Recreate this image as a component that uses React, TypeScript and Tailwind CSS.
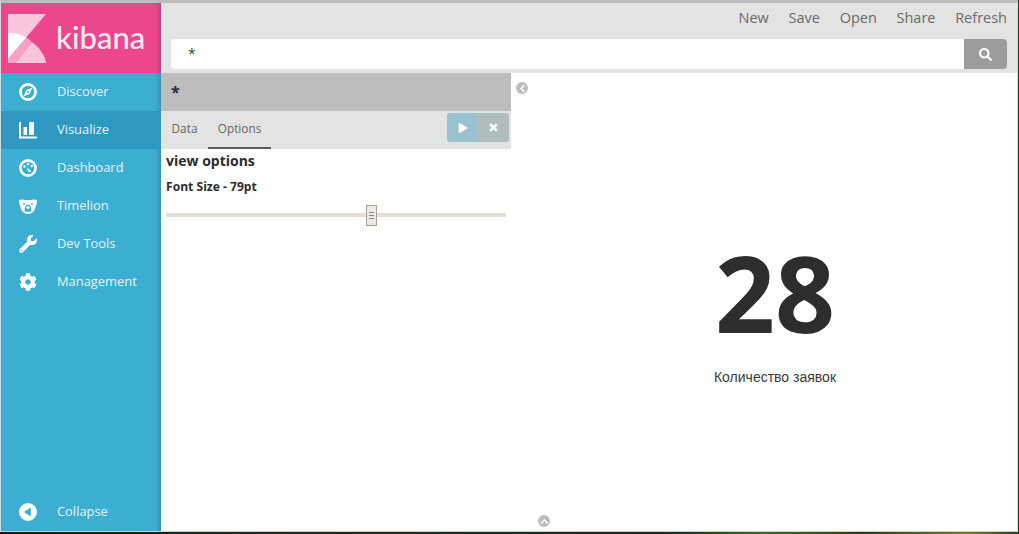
import React from "react";
import { FaWrench, FaCog, FaSearch, FaPlay, FaChevronLeft, FaChevronUp } from "react-icons/fa";

const Logo = () => (
  <svg width="38" height="49" viewBox="0 0 38 49" className="block">
    <path d="M0 0H38L0 45Z" fill="#f9c6dc" />
    <path d="M0 19C7 18.800 13 20 18.500 23.500L0 45Z" fill="#ffffff" />
    <path d="M24 28C31 33 37 41 38 49H7.500Z" fill="#f9c6dc" />
    <path d="M18.500 23.500L24 28L7.500 49H0V45Z" fill="#f5a3c7" />
  </svg>
);

const Compass = () => (
  <svg width="18" height="18" viewBox="0 0 18 18">
    <circle cx="9" cy="9" r="7.600" fill="none" stroke="#fff" strokeWidth="2.600" />
    <path d="M13.500 4.500L10.700 10.700L4.500 13.500L7.300 7.300Z" fill="#fff" />
    <circle cx="9" cy="9" r="1" fill="#3caed2" />
  </svg>
);

const Bars = () => (
  <svg width="18" height="17" viewBox="0 0 18 17">
    <path d="M0 0H2V14.500H18V16.500H0Z" fill="#fff" />
    <rect x="4.500" y="5" width="3.500" height="8" fill="#fff" />
    <rect x="10" y="0" width="5" height="13" fill="#fff" />
  </svg>
);

const Gauge = () => (
  <svg width="18" height="18" viewBox="0 0 18 18">
    <circle cx="9" cy="9" r="7.600" fill="none" stroke="#fff" strokeWidth="2.600" />
    <circle cx="9" cy="5" r="1.300" fill="#fff" />
    <circle cx="12.800" cy="7" r="1.200" fill="#fff" />
    <circle cx="5.500" cy="7.500" r="1.200" fill="#fff" />
    <path d="M7.500 8.500L12.500 12L10 13.500Z" fill="#fff" />
  </svg>
);

const Bear = () => (
  <svg width="18" height="15" viewBox="0 0 18 15">
    <path
      d="M0 1C3 0 5 .5 6 1H12C13 .5 15 0 18 1C18 4 17.500 5.500 16.800 6.500C16.500 11 13.500 15 9 15C4.500 15 1.500 11 1.200 6.500C.5 5.500 0 4 0 1Z"
      fill="#fff"
    />
    <circle cx="5" cy="5" r=".9" fill="#3caed2" />
    <circle cx="13" cy="5" r=".9" fill="#3caed2" />
    <path d="M9 5.500C11.500 5.500 12.800 9 12.200 12.800H5.800C5.200 9 6.500 5.500 9 5.500Z" fill="#3caed2" />
    <ellipse cx="9" cy="8.500" rx="1.800" ry="1.300" fill="#fff" />
  </svg>
);

const CollapseIcon = () => (
  <svg width="18" height="18" viewBox="0 0 18 18">
    <circle cx="9" cy="9" r="9" fill="#fff" />
    <path d="M11.800 4.500V13.500L5 9Z" fill="#3caed2" />
  </svg>
);

const CloseIcon = () => (
  <svg width="9" height="9" viewBox="0 0 9 9">
    <path d="M1.200 1.200L7.800 7.800M7.800 1.200L1.200 7.800" stroke="#fff" strokeWidth="2.600" />
  </svg>
);

const navItems = [
  { label: "Discover", icon: <Compass /> },
  { label: "Visualize", icon: <Bars />, active: true },
  { label: "Dashboard", icon: <Gauge /> },
  { label: "Timelion", icon: <Bear /> },
  { label: "Dev Tools", icon: <FaWrench size={18} color="#fff" /> },
  { label: "Management", icon: <FaCog size={18} color="#fff" /> },
];

function NavRow({ label, icon, active }: { label: string; icon: React.ReactNode; active?: boolean }) {
  return (
    <div className={`flex h-[38px] items-center ${active ? "bg-[#2e98c1]" : ""}`}>
      <div className="flex w-[56px] shrink-0 pl-[18px]">{icon}</div>
      <span className="text-[12.9px] text-[#e4f4f9]">{label}</span>
    </div>
  );
}

export default function App() {
  return (
    <div className="flex h-[534px] w-[1019px] flex-col overflow-hidden bg-[linear-gradient(to_right,#0a1a1c,#10301c_30%,#0c2a18_65%,#3a6a20_75%,#20401a_85%,#7a7a20_95%,#20401a)] font-['Open_Sans',sans-serif]">
      <div className="flex h-[532px] w-[1018px] flex-col border-x border-b border-x-[#d8d8d8] border-b-[#cfcfcf] border-t-[3px] border-t-[#bdbdbd] bg-white">
        <div className="flex min-h-0 flex-1">
          {/* sidebar */}
          <div className="flex w-[160px] shrink-0 flex-col bg-[#3caed2] shadow-[inset_-5px_0_4px_-3px_rgba(0,0,0,0.18)]">
            <div className="flex h-[70px] shrink-0 items-center gap-[10px] bg-[#ec478c] pl-[7px] shadow-[inset_-5px_0_4px_-3px_rgba(0,0,0,0.18)]">
              <Logo />
              <span className="mt-[-1px] text-[31px] leading-none font-medium text-[#fdeaf2] font-['Lato',sans-serif]">kibana</span>
            </div>
            {navItems.map((item) => (
              <NavRow key={item.label} {...item} />
            ))}
            <div className="mt-auto">
              <NavRow label="Collapse" icon={<CollapseIcon />} />
            </div>
          </div>

          {/* main */}
          <div className="flex min-w-0 flex-1 flex-col">
            <div className="h-[70px] shrink-0 bg-[#e3e3e3] pr-[10px]">
              <div className="flex h-[36px] items-center justify-end gap-[19.700px] pb-[6px] text-[14.5px] text-[#6a6a6a]">
                <span>New</span>
                <span>Save</span>
                <span>Open</span>
                <span>Share</span>
                <span>Refresh</span>
              </div>
              <div className="ml-[10px] flex h-[30px]">
                <div className="flex-1 rounded-l-[4px] bg-white pl-[17px] text-[14px] leading-[30px] text-[#444]">*</div>
                <div className="flex w-[43px] items-center justify-center rounded-r-[4px] bg-[#9c9c9c]">
                  <FaSearch size={13} color="#fff" />
                </div>
              </div>
            </div>

            <div className="relative flex min-h-0 flex-1">
              {/* editor panel */}
              <div className="w-[350px] shrink-0">
                <div className="h-[38px] bg-[#bdbdbd] pl-[10px] text-[16px] leading-[38px] font-bold text-[#2d2d2d]">*</div>
                <div className="flex h-[38px] items-stretch justify-between bg-[#e3e3e3] pr-[2px]">
                  <div className="flex text-[11.8px] text-[#666]">
                    <div className="flex w-[47px] items-center justify-center pb-[2px]">Data</div>
                    <div className="flex w-[63px] items-center justify-center border-b-2 border-b-[#5c5c5c]">Options</div>
                  </div>
                  <div className="mt-[2px] flex h-[29px] overflow-hidden rounded-[3px]">
                    <div className="flex w-[31px] items-center justify-center bg-[#9ac1ce]">
                      <FaPlay size={10} color="#fff" />
                    </div>
                    <div className="flex w-[31px] items-center justify-center bg-[#b1bcbf]">
                      <CloseIcon />
                    </div>
                  </div>
                </div>
                <div className="px-[5px]">
                  <div className="mt-[2px] text-[14px] leading-[20px] font-bold text-[#2d2d2d]">view options</div>
                  <div className="mt-[8px] text-[12.100px] leading-[16px] font-bold text-[#2d2d2d]">Font Size - 79pt</div>
                  <div className="relative mt-[18px] h-[4px] w-[340px] bg-[#e3ded8]">
                    <div className="absolute top-[-8px] left-[200px] flex h-[21px] w-[11px] flex-col items-center justify-center gap-[2px] border border-[#a89f94] bg-[#eeebe7]">
                      <span className="h-[1px] w-[5px] bg-[#8a8178]" />
                      <span className="h-[1px] w-[5px] bg-[#8a8178]" />
                      <span className="h-[1px] w-[5px] bg-[#8a8178]" />
                    </div>
                  </div>
                </div>
              </div>

              {/* metric */}
              <div className="relative flex min-w-0 flex-1 flex-col items-center">
                <div className="absolute top-[9px] left-[5px] flex h-[12px] w-[12px] items-center justify-center rounded-full bg-[#bdbdbd]">
                  <FaChevronLeft size={9} color="#fff" />
                </div>
                <div className="mt-[160px] ml-[22px] text-[105px] leading-[120px] font-bold text-[#2d2d2d]">28</div>
                <div className="mt-[16px] ml-[22px] text-[14px] leading-[16px] text-[#3a3a3a] font-['Liberation_Sans',sans-serif]">Количество заявок</div>
              </div>

              <div className="absolute bottom-[4px] left-[377px] flex h-[12px] w-[12px] items-center justify-center rounded-full bg-[#bdbdbd]">
                <FaChevronUp size={9} color="#fff" />
              </div>
            </div>
          </div>
        </div>
      </div>
    </div>
  );
}
